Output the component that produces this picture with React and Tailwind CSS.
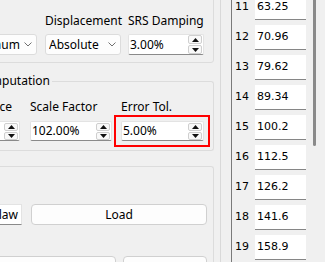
import React from "react";

function Chevron() {
  return (
    <svg width="8" height="5" viewBox="0 0 8 5" className="shrink-0">
      <polyline points="0.5,0.5 4,4 7.5,0.5" fill="none" stroke="#707070" strokeWidth="1" />
    </svg>
  );
}

function Combo({ text, pl }) {
  return (
    <div className={"h-[21px] bg-[#fdfdfd] border border-[#dcdcdc] rounded-[3px] flex items-center pr-[4px] " + pl}>
      <span className="flex-1 whitespace-nowrap overflow-hidden">{text}</span>
      <Chevron />
    </div>
  );
}

function SpinButtons({ h }) {
  const box =
    "w-[14px] border border-[#cfcfcf] rounded-[2px] bg-[#f9f9f9] flex items-center justify-center";
  return (
    <div className="flex flex-col gap-[1px] mr-[1px] shrink-0">
      <div className={box} style={{ height: h }}>
        <svg width="7" height="4" viewBox="0 0 7 4">
          <path d="M0 4 L3.5 0 L7 4Z" fill="#111" />
        </svg>
      </div>
      <div className={box} style={{ height: h }}>
        <svg width="7" height="4" viewBox="0 0 7 4">
          <path d="M0 0 L3.5 4 L7 0Z" fill="#111" />
        </svg>
      </div>
    </div>
  );
}

function Spin({ text, tall }) {
  return (
    <div
      className={
        "bg-white border border-[#e3e3e3] border-b-[#8a8a8a] rounded-[2px] flex items-center pl-[1px] " +
        (tall ? "h-[21px]" : "h-[20px]")
      }
    >
      <span className="flex-1 whitespace-nowrap overflow-hidden">{text}</span>
      <SpinButtons h={tall ? 9 : 8} />
    </div>
  );
}

const rows = [
  ["11", "63.25"],
  ["12", "70.96"],
  ["13", "79.62"],
  ["14", "89.34"],
  ["15", "100.2"],
  ["16", "112.5"],
  ["17", "126.2"],
  ["18", "141.6"],
  ["19", "158.9"],
];

export default function App() {
  return (
    <div className="w-[325px] h-[262px] overflow-hidden bg-[#f0f0f0] flex text-[12px] leading-[16px] text-black font-['Noto_Sans',sans-serif]">
      {/* left panel */}
      <div className="w-[221px] shrink-0 h-full overflow-hidden border-r border-[#d9d9d9]">
        <div className="ml-[-70px] w-[284px] flex flex-col">
          {/* group 1 */}
          <div className="mt-[-20px] border border-[#dcdcdc] rounded-[3px] pt-[32px] pb-[7px] pl-[30px]">
            <div className="flex">
              <div className="w-[76px] h-[16px]">Type</div>
              <div className="w-[76px] ml-[8px] h-[16px] whitespace-nowrap">Displacement</div>
              <div className="w-[76px] ml-[7px] h-[16px] whitespace-nowrap">SRS Damping</div>
            </div>
            <div className="flex mt-[5px]">
              <div className="w-[76px]">
                <Combo text="Maximum" pl="pl-[1px]" />
              </div>
              <div className="w-[76px] ml-[8px]">
                <Combo text="Absolute" pl="pl-[3px]" />
              </div>
              <div className="w-[76px] ml-[7px]">
                <Spin text="3.00%" tall />
              </div>
            </div>
          </div>

          {/* group 2: Computation */}
          <div className="mt-[10px] flex flex-col">
            <div className="flex h-[16px]">
              <div className="w-[8px] h-[8px] self-end border-l border-t border-[#dcdcdc] rounded-tl-[3px]" />
              <div className="w-[114px] text-right pr-[2px] whitespace-nowrap">Computation</div>
              <div className="flex-1 h-[8px] self-end border-t border-r border-[#dcdcdc] rounded-tr-[3px]" />
            </div>
            <div className="border-l border-r border-b border-[#dcdcdc] rounded-b-[3px] pt-[10px] pb-[9px] pl-[7px]">
              <div className="flex">
                <div className="w-[82px] h-[16px] whitespace-nowrap">Convergence</div>
                <div className="w-[82px] ml-[10px] h-[16px] whitespace-nowrap">Scale Factor</div>
                <div className="w-[83px] ml-[9px] h-[16px] whitespace-nowrap">Error Tol.</div>
              </div>
              <div className="flex mt-[6px]">
                <div className="w-[82px]">
                  <Spin text="20" />
                </div>
                <div className="w-[82px] ml-[10px]">
                  <Spin text="102.00%" />
                </div>
                <div className="w-[83px] ml-[9px] relative">
                  <Spin text="5.00%" />
                  <div className="absolute left-[-7px] right-[-6px] top-[-6px] bottom-[-6px] border-2 border-[#ff0000]" />
                </div>
              </div>
            </div>
          </div>

          {/* group 3 */}
          <div className="mt-[15px] border-t border-l border-r border-[#dcdcdc] rounded-t-[3px] pt-[37px] pl-[7px] pr-[6px]">
            <div className="flex h-[21px]">
              <div className="w-[84px] bg-white border border-[#e3e3e3] border-b-[#8a8a8a] flex items-center justify-end pr-[3px] whitespace-nowrap overflow-hidden">
                Power law
              </div>
              <button className="flex-1 ml-[9px] bg-[#fdfdfd] border border-[#d0d0d0] rounded-[4px] flex items-center justify-center">
                Load
              </button>
            </div>
            <div className="flex h-[21px] mt-[31px]">
              <button className="w-[178px] bg-[#fdfdfd] border border-[#d0d0d0] rounded-[4px] flex items-center justify-center">
                Export
              </button>
              <button className="flex-1 ml-[7px] bg-[#fdfdfd] border border-[#d0d0d0] rounded-[4px] flex items-center justify-center">
                Save
              </button>
            </div>
          </div>
        </div>
      </div>

      {/* right: table */}
      <div className="flex-1 h-full pl-[10px] flex">
        <div className="h-full flex border-l border-[#7a7a7a] overflow-hidden font-['DejaVu_Sans',sans-serif] text-[11px]">
          <div className="flex flex-col mt-[-10px]">
            {rows.map(([n, v]) => (
              <div key={n} className="flex h-[30px] pt-[5px] shrink-0">
                <div className="w-[23px] h-[24px] flex items-center pl-[3px]">{n}</div>
                <div className="w-[51px] h-[25px] bg-white border-b border-[#868686] flex items-center pl-[2px]">{v}</div>
              </div>
            ))}
          </div>
          <div className="ml-[7px] w-[3px] h-[146px] bg-[#8a8a8a] rounded-b-[2px]" />
        </div>
      </div>
    </div>
  );
}
